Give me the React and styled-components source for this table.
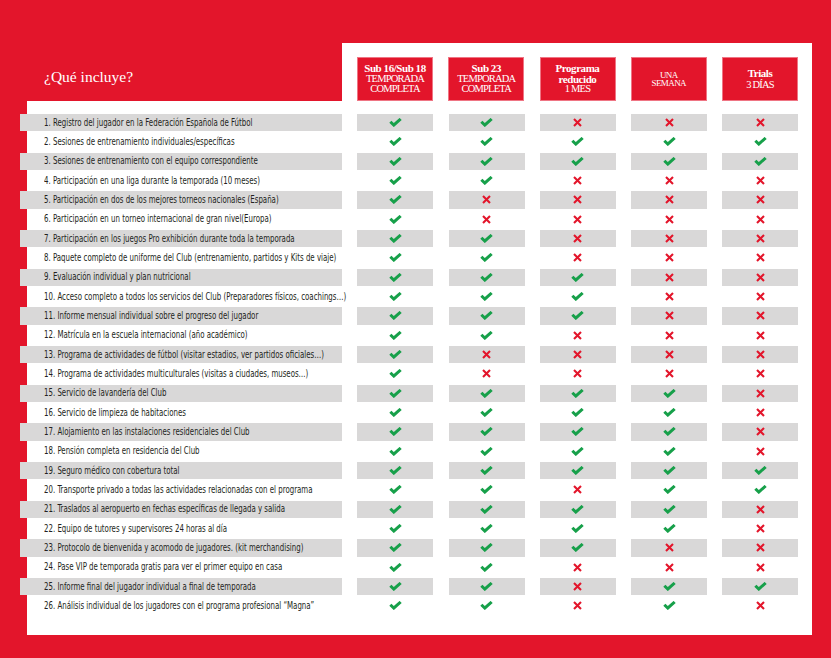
import React from 'react';
import styled, { createGlobalStyle } from 'styled-components';

const RED = '#e3152b';
const GREEN = '#17a04a';
const SHADE = '#d9d8d8';

const GlobalStyle = createGlobalStyle`
  html, body {
    margin: 0;
    padding: 0;
    background: ${RED};
  }
`;

const plans = [
  { name: 'Sub 16/Sub 18', note: ['Temporada', 'completa'] },
  { name: 'Sub 23', note: ['Temporada', 'completa'] },
  { name: ['Programa', 'reducido'], note: ['1 mes'] },
  { note: ['Una', 'semana'], small: true },
  { name: 'Trials', note: ['3 días'], spaced: true },
];

// 1 = incluido, 0 = no incluido
const features = [
  ['1. Registro del jugador en la Federación Española de Fútbol', [1, 1, 0, 0, 0]],
  ['2. Sesiones de entrenamiento individuales/específicas', [1, 1, 1, 1, 1]],
  ['3. Sesiones de entrenamiento con el equipo correspondiente', [1, 1, 1, 1, 1]],
  ['4. Participación en una liga durante la temporada (10 meses)', [1, 1, 0, 0, 0]],
  ['5. Participación en dos de los mejores torneos nacionales (España)', [1, 0, 0, 0, 0]],
  ['6. Participación en un torneo internacional de gran nivel(Europa)', [1, 0, 0, 0, 0]],
  ['7. Participación en los juegos Pro exhibición durante toda la temporada', [1, 1, 0, 0, 0]],
  ['8. Paquete completo de uniforme del Club (entrenamiento, partidos y Kits de viaje)', [1, 1, 0, 0, 0]],
  ['9. Evaluación individual y plan nutricional', [1, 1, 1, 0, 0]],
  ['10. Acceso completo a todos los servicios del Club (Preparadores físicos, coachings…)', [1, 1, 1, 0, 0]],
  ['11. Informe mensual individual sobre el progreso del jugador', [1, 1, 1, 0, 0]],
  ['12. Matrícula en la escuela internacional (año académico)', [1, 1, 0, 0, 0]],
  ['13. Programa de actividades de fútbol (visitar estadios, ver partidos oficiales…)', [1, 0, 0, 0, 0]],
  ['14. Programa de actividades multiculturales (visitas a ciudades, museos…)', [1, 0, 0, 0, 0]],
  ['15. Servicio de lavandería del Club', [1, 1, 1, 1, 0]],
  ['16. Servicio de limpieza de habitaciones', [1, 1, 1, 1, 0]],
  ['17. Alojamiento en las instalaciones residenciales del Club', [1, 1, 1, 1, 0]],
  ['18. Pensión completa en residencia del Club', [1, 1, 1, 1, 0]],
  ['19. Seguro médico con cobertura total', [1, 1, 1, 1, 1]],
  ['20. Transporte privado a todas las actividades relacionadas con el programa', [1, 1, 0, 1, 1]],
  ['21. Traslados al aeropuerto en fechas específicas de llegada y salida', [1, 1, 1, 1, 0]],
  ['22. Equipo de tutores y supervisores 24 horas al día', [1, 1, 1, 1, 0]],
  ['23. Protocolo de bienvenida y acomodo de jugadores. (kit merchandising)', [1, 1, 1, 0, 0]],
  ['24. Pase VIP de temporada gratis para ver el primer equipo en casa', [1, 1, 0, 0, 0]],
  ['25. Informe final del jugador individual a final de temporada', [1, 1, 0, 1, 1]],
  ['26. Análisis individual de los jugadores con el programa profesional “Magna”', [1, 1, 0, 1, 0]],
];

const Page = styled.div`
  width: 831px;
  height: 658px;
  box-sizing: border-box;
  background: ${RED};
  padding: 43px 0 0 27px;
  overflow: hidden;
`;

const Header = styled.div`
  display: flex;
`;

const Title = styled.h2`
  flex: 0 0 315px;
  box-sizing: border-box;
  align-self: flex-end;
  margin: 0;
  padding: 0 0 15px 17px;
  font-family: "Liberation Serif", "DejaVu Serif", serif;
  font-weight: normal;
  font-size: 15.5px;
  line-height: 18px;
  color: #fff;
`;

const HeaderPanel = styled.div`
  flex: 0 0 470px;
  box-sizing: border-box;
  background: #fff;
  padding: 14px 14px 0 15px;
  display: grid;
  grid-template-columns: repeat(5, 76px);
  column-gap: 15.25px;
`;

const PlanBox = styled.div`
  height: 44px;
  box-sizing: border-box;
  background: ${RED};
  border: 1px solid #ef7584;
  display: flex;
  flex-direction: column;
  align-items: center;
  justify-content: center;
  gap: ${p => (p.$spaced ? '2px' : '0')};
  color: #fff;
  font-family: "Liberation Serif", "DejaVu Serif", serif;
  text-align: center;
  white-space: nowrap;
`;

const PlanName = styled.div`
  font-weight: bold;
  font-size: 11px;
  line-height: 10.5px;
  letter-spacing: -0.45px;
`;

const PlanNote = styled.div`
  font-size: ${p => (p.$small ? '9px' : '10.5px')};
  line-height: ${p => (p.$small ? '8.5px' : '10.5px')};
  text-transform: uppercase;
  letter-spacing: ${p => (p.$small ? '-0.6px' : '-0.8px')};
`;

const Body = styled.div`
  width: 785px;
  box-sizing: border-box;
  background: #fff;
  padding: 13px 14px 20px 0;
  display: flex;
  flex-direction: column;
  gap: 2px;
`;

const Row = styled.div`
  display: grid;
  grid-template-columns: 322px repeat(5, 76px);
  column-gap: 15.25px;
  height: 17.33px;
  margin-left: -7px;
`;

const Cell = styled.div`
  display: flex;
  align-items: center;
  justify-content: center;
  background: ${p => (p.$shade ? SHADE : 'transparent')};
`;

const Label = styled(Cell)`
  justify-content: flex-start;
  padding-left: 24px;
  overflow: visible;
  min-width: 0;
`;

// condensed face: the installed fonts have no narrow cut, so squeeze the line
const LabelText = styled.span`
  display: inline-block;
  font-family: "DejaVu Sans Condensed", "DejaVu Sans", sans-serif;
  font-size: 10px;
  line-height: 12px;
  color: #231f20;
  white-space: nowrap;
  transform: scaleX(0.78);
  transform-origin: left center;
`;

const Check = () => (
  <svg width="13" height="9" viewBox="0 0 13 9" aria-label="sí">
    <path d="M0.3 4.7 L2.4 2.7 L4.8 5.1 L10.6 -0.1 L12.7 1.9 L4.8 9.1 Z" fill={GREEN} />
  </svg>
);

const Cross = () => (
  <svg width="9" height="9" viewBox="0 0 9 9" aria-label="no">
    <path d="M1 1 L8 8 M8 1 L1 8" stroke={RED} strokeWidth="2.1" />
  </svg>
);

const Lines = ({ items, as: Comp, ...rest }) =>
  [].concat(items).map(t => (
    <Comp key={t} {...rest}>
      {t}
    </Comp>
  ));

export default function App() {
  return (
    <Page>
      <GlobalStyle />
      <Header>
        <Title>¿Qué incluye?</Title>
        <HeaderPanel>
          {plans.map((p, i) => (
            <PlanBox key={i} $spaced={p.spaced}>
              {p.name && <Lines items={p.name} as={PlanName} />}
              <Lines items={p.note} as={PlanNote} $small={p.small} />
            </PlanBox>
          ))}
        </HeaderPanel>
      </Header>
      <Body>
        {features.map(([text, marks], i) => {
          const shade = i % 2 === 0;
          return (
            <Row key={text}>
              <Label $shade={shade}>
                <LabelText>{text}</LabelText>
              </Label>
              {marks.map((m, j) => (
                <Cell key={j} $shade={shade}>
                  {m ? <Check /> : <Cross />}
                </Cell>
              ))}
            </Row>
          );
        })}
      </Body>
    </Page>
  );
}
